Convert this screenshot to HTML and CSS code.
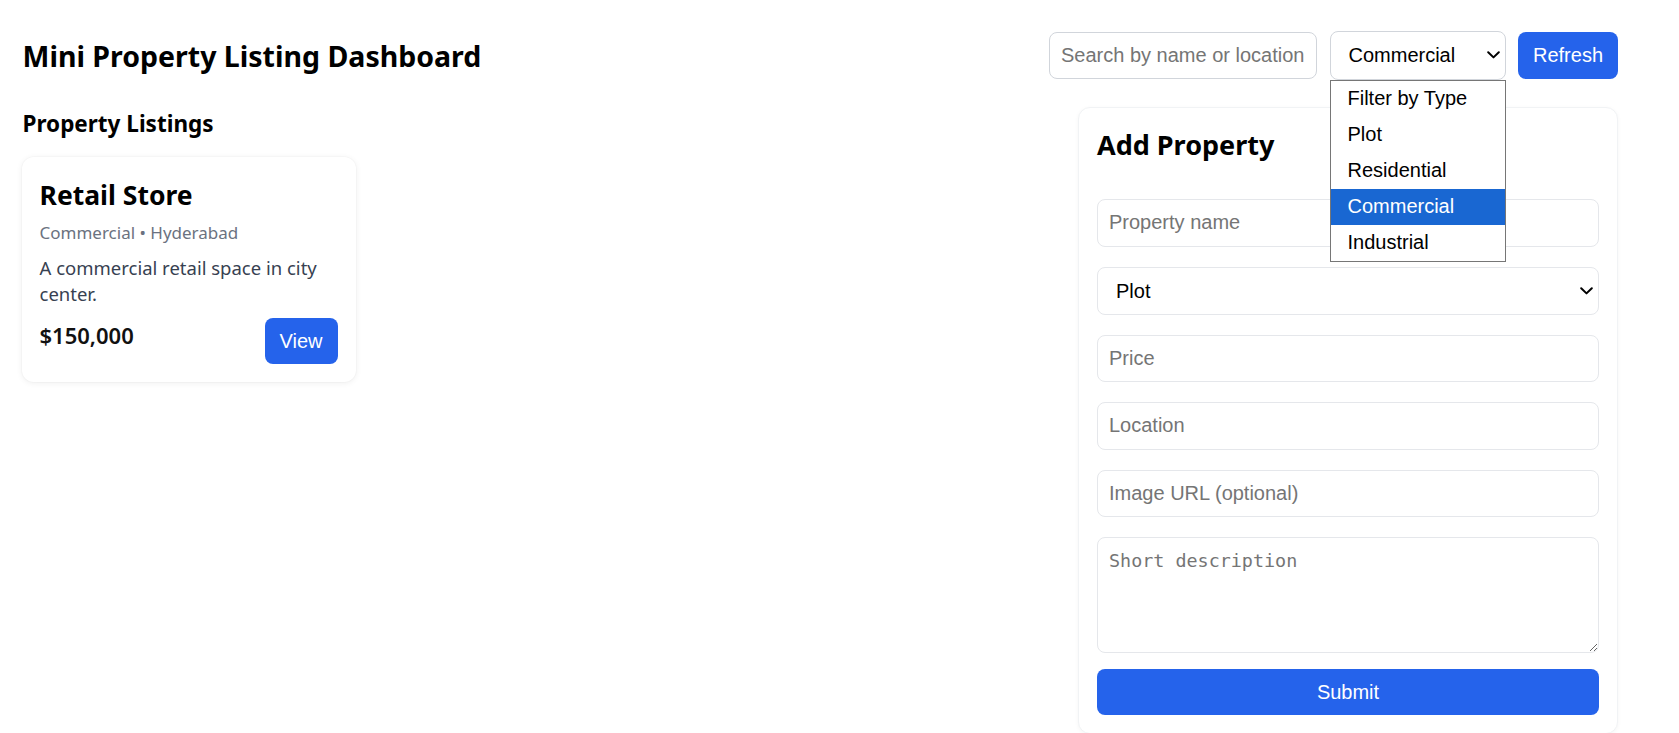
FILE: index.html
```html
<!DOCTYPE html>
<html lang="en">
<head>
<meta charset="utf-8">
<title>Mini Property Listing Dashboard</title>
<link rel="stylesheet" href="styles.css">
</head>
<body>
<div class="page">
  <header class="topbar">
    <h1 class="title">Mini Property Listing Dashboard</h1>
    <div class="controls">
      <input class="search" type="text" placeholder="Search by name or location">
      <div class="filter select-wrap">
        <select class="filter-select">
          <option>Filter by Type</option>
          <option>Plot</option>
          <option>Residential</option>
          <option selected>Commercial</option>
          <option>Industrial</option>
        </select>
        <svg class="chevron" width="13" height="8" viewBox="0 0 13 8" aria-hidden="true"><path d="M1.2 1.2 L6.5 6.4 L11.8 1.2" fill="none" stroke="#000" stroke-width="2" stroke-linecap="round" stroke-linejoin="round"/></svg>
        <ul class="dropdown">
          <li class="dropdown-item">Filter by Type</li>
          <li class="dropdown-item">Plot</li>
          <li class="dropdown-item">Residential</li>
          <li class="dropdown-item is-active">Commercial</li>
          <li class="dropdown-item">Industrial</li>
        </ul>
      </div>
      <button class="btn btn-refresh" type="button">Refresh</button>
    </div>
  </header>

  <main class="layout">
    <section class="listings">
      <h2 class="section-title">Property Listings</h2>
      <div class="cards">
        <article class="card">
          <h3 class="card-title">Retail Store</h3>
          <p class="card-meta">Commercial • Hyderabad</p>
          <p class="card-desc">A commercial retail space in city center.</p>
          <div class="card-footer">
            <span class="card-price">$150,000</span>
            <button class="btn btn-view" type="button">View</button>
          </div>
        </article>
      </div>
    </section>

    <aside class="form-card">
      <h2 class="form-title">Add Property</h2>
      <form class="form">
        <input class="field" type="text" placeholder="Property name">
        <div class="select-wrap field-wrap">
          <select class="field field-select">
            <option selected>Plot</option>
            <option>Residential</option>
            <option>Commercial</option>
            <option>Industrial</option>
          </select>
          <svg class="chevron" width="13" height="8" viewBox="0 0 13 8" aria-hidden="true"><path d="M1.2 1.2 L6.5 6.4 L11.8 1.2" fill="none" stroke="#000" stroke-width="2" stroke-linecap="round" stroke-linejoin="round"/></svg>
        </div>
        <input class="field" type="text" placeholder="Price">
        <input class="field" type="text" placeholder="Location">
        <input class="field" type="text" placeholder="Image URL (optional)">
        <textarea class="field field-area" placeholder="Short description"></textarea>
        <button class="btn btn-submit" type="button">Submit</button>
      </form>
    </aside>
  </main>
</div>
</body>
</html>
```

FILE: styles.css
```css
html, body {
  margin: 0;
  padding: 0;
  background: #ffffff;
  overflow: hidden;
}

body {
  font-family: "Noto Sans", "Open Sans", sans-serif;
  color: #111111;
}

.page {
  padding: 31px 61px 0 22.5px;
}

/* Header */
.topbar {
  display: flex;
  align-items: center;
  justify-content: space-between;
}

.title {
  margin: 0;
  font-size: 28.5px;
  font-weight: 700;
  line-height: 1.2;
  color: #000000;
  padding-top: 1px;
}

.controls {
  display: flex;
  align-items: center;
  gap: 12.5px;
}

.search,
.filter-select,
.field,
.btn {
  font-family: "Liberation Sans", Arial, sans-serif;
  font-size: 20px;
  box-sizing: border-box;
}

.search {
  width: 268px;
  height: 47.5px;
  padding: 0 11px;
  border: 1px solid #d1d5db;
  border-radius: 8px;
  background: #ffffff;
  color: #111111;
  outline: none;
}

.search::placeholder,
.field::placeholder {
  color: #757575;
}

.select-wrap {
  position: relative;
}

.chevron {
  position: absolute;
  right: 6px;
  top: 50%;
  margin-top: -4px;
  pointer-events: none;
}

.filter-select {
  display: block;
  width: 176px;
  height: 48.5px;
  padding: 0 24px 0 18px;
  border: 1px solid #d1d5db;
  border-radius: 8px;
  background-color: #ffffff;
  color: #000000;
  -webkit-appearance: none;
  appearance: none;
}

.dropdown {
  position: absolute;
  top: 100%;
  left: 0;
  z-index: 10;
  width: 176px;
  margin: 0;
  padding: 0;
  list-style: none;
  box-sizing: border-box;
  background: #ffffff;
  border: 1px solid #767676;
  font-family: "Liberation Sans", Arial, sans-serif;
  font-size: 20px;
  color: #000000;
}

.dropdown-item {
  height: 36px;
  line-height: 35px;
  padding: 0 0 0 17px;
}

.dropdown-item.is-active {
  background: #1967d2;
  color: #ffffff;
}

.btn {
  border: none;
  border-radius: 8px;
  background: #2563eb;
  color: #ffffff;
  cursor: pointer;
  display: inline-flex;
  align-items: center;
  justify-content: center;
  padding: 0 15px;
}

.btn-refresh {
  height: 46.5px;
  width: 100px;
}

/* Layout */
.layout {
  display: grid;
  grid-template-columns: 1fr 540px;
  align-items: start;
  margin-top: 27.5px;
}

.section-title {
  margin: 0;
  font-size: 22.5px;
  font-weight: 700;
  line-height: 34px;
  color: #000000;
}

.cards {
  display: grid;
  grid-template-columns: repeat(auto-fill, 334px);
  gap: 16px;
  margin-top: 16px;
  margin-left: -1px;
}

.card {
  background: #ffffff;
  border-radius: 12px;
  padding: 18px;
  box-shadow: 0 1px 6px rgba(0, 0, 0, 0.07), 0 0 0 1px rgba(0, 0, 0, 0.015);
}

.card-title {
  margin: 0;
  font-size: 26.5px;
  font-weight: 700;
  line-height: 40px;
  color: #000000;
}

.card-meta {
  margin: 6px 0 0;
  font-size: 17px;
  line-height: 24px;
  color: #6b7280;
}

.card-desc {
  margin: 10px 0 0;
  font-size: 18.5px;
  line-height: 25.7px;
  color: #374151;
}

.card-footer {
  display: flex;
  justify-content: space-between;
  align-items: flex-start;
  margin-top: 12px;
}

.card-price {
  font-size: 22px;
  font-weight: 600;
  line-height: 34px;
  color: #111111;
}

.btn-view {
  height: 46px;
}

/* Form card */
.form-card {
  background: #ffffff;
  border: 1px solid #f1f3f5;
  border-radius: 12px;
  padding: 18px;
  box-shadow: 0 1px 4px rgba(0, 0, 0, 0.04);
}

.form-title {
  margin: 0 0 36px;
  font-size: 27px;
  font-weight: 700;
  line-height: 37px;
  color: #000000;
}

.form {
  display: flex;
  flex-direction: column;
  margin: 0;
}

.field {
  display: block;
  width: 100%;
  height: 47.5px;
  margin: 0 0 20px;
  padding: 0 11px;
  border: 1px solid #e5e7eb;
  border-radius: 8px;
  background: #ffffff;
  color: #000000;
  outline: none;
}

.field-wrap {
  margin: 0 0 20px;
}

.field-select {
  margin: 0;
  height: 48px;
  padding-left: 18px;
  padding-right: 24px;
  -webkit-appearance: none;
  appearance: none;
}

.field-area {
  height: 116px;
  margin-bottom: 16px;
  padding: 12px 11px;
  font-family: "DejaVu Sans Mono", "Liberation Mono", monospace;
  font-size: 18.4px;
  line-height: 1.2;
  resize: both;
}

.btn-submit {
  width: 100%;
  height: 46px;
}
```
